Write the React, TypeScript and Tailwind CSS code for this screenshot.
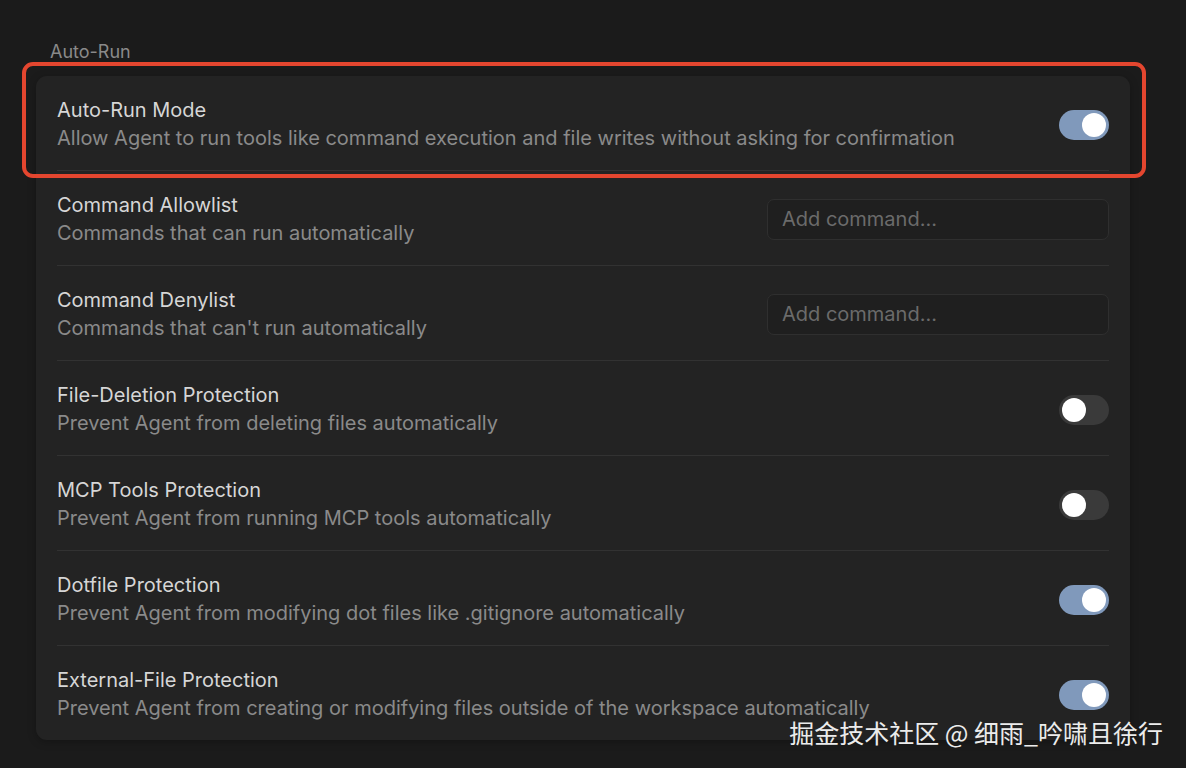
import React from 'react';

type Row = {
  title: string;
  desc: string;
  kind: 'toggle' | 'input';
  on?: boolean;
};

const rows: Row[] = [
  {
    title: 'Auto-Run Mode',
    desc: 'Allow Agent to run tools like command execution and file writes without asking for confirmation',
    kind: 'toggle',
    on: true,
  },
  { title: 'Command Allowlist', desc: 'Commands that can run automatically', kind: 'input' },
  { title: 'Command Denylist', desc: "Commands that can't run automatically", kind: 'input' },
  { title: 'File-Deletion Protection', desc: 'Prevent Agent from deleting files automatically', kind: 'toggle', on: false },
  { title: 'MCP Tools Protection', desc: 'Prevent Agent from running MCP tools automatically', kind: 'toggle', on: false },
  {
    title: 'Dotfile Protection',
    desc: 'Prevent Agent from modifying dot files like .gitignore automatically',
    kind: 'toggle',
    on: true,
  },
  {
    title: 'External-File Protection',
    desc: 'Prevent Agent from creating or modifying files outside of the workspace automatically',
    kind: 'toggle',
    on: true,
  },
];

function Toggle({ on }: { on?: boolean }) {
  return (
    <div
      className={`mt-[2px] flex h-[30px] w-[50px] shrink-0 items-center rounded-full px-[3px] ${
        on ? 'justify-end bg-[#8099bb]' : 'justify-start bg-[#3a3a3a]'
      }`}
    >
      <div className="h-[24px] w-[24px] rounded-full bg-white" />
    </div>
  );
}

export default function App() {
  return (
    <div
      className="relative h-[768px] w-[1186px] overflow-hidden bg-[#1b1b1b]"
      style={{ fontFamily: 'Inter, "Noto Sans", sans-serif' }}
    >
      <div className="pl-[36px] pr-[56px] pt-[41px]">
        <div className="pl-[14px] text-[18px] leading-[22px] text-[#8a8a8a]">Auto-Run</div>

        <div className="relative mt-[13px] rounded-[11px] bg-[#232323] px-[21px] shadow-[0_2px_8px_rgba(0,0,0,0.25)]">
          {rows.map((row, i) => (
            <div
              key={row.title}
              className={`flex items-center justify-between pb-[18px] pt-[20px] ${
                i < rows.length - 1 ? 'border-b border-[#323232]' : ''
              }`}
            >
              <div className="flex flex-col">
                <span className="text-[20px] leading-[28px] text-[#d6d6d6]">{row.title}</span>
                <span className="text-[20px] leading-[28px] text-[#8a8a8a]">{row.desc}</span>
              </div>
              {row.kind === 'toggle' ? (
                <Toggle on={row.on} />
              ) : (
                <div className="flex h-[41px] w-[342px] shrink-0 items-center rounded-[7px] border border-[#2f2f2f] bg-[#1f1f1f] px-[14px] text-[20px] text-[#6b6b6b]">
                  Add command...
                </div>
              )}
            </div>
          ))}

          {/* highlight around first row */}
          <div className="pointer-events-none absolute left-[-14px] right-[-16px] top-[-14px] h-[116px] rounded-[11px] border-[4px] border-[#e4462f]" />
        </div>
      </div>

      <div
        className="absolute bottom-[21px] right-[23px] text-[25px] leading-[30px] text-[#ececec]"
        style={{ fontFamily: '"Noto Sans CJK SC", "Noto Sans", sans-serif' }}
      >
        掘金技术社区 @ 细雨_吟啸且徐行
      </div>
    </div>
  );
}
